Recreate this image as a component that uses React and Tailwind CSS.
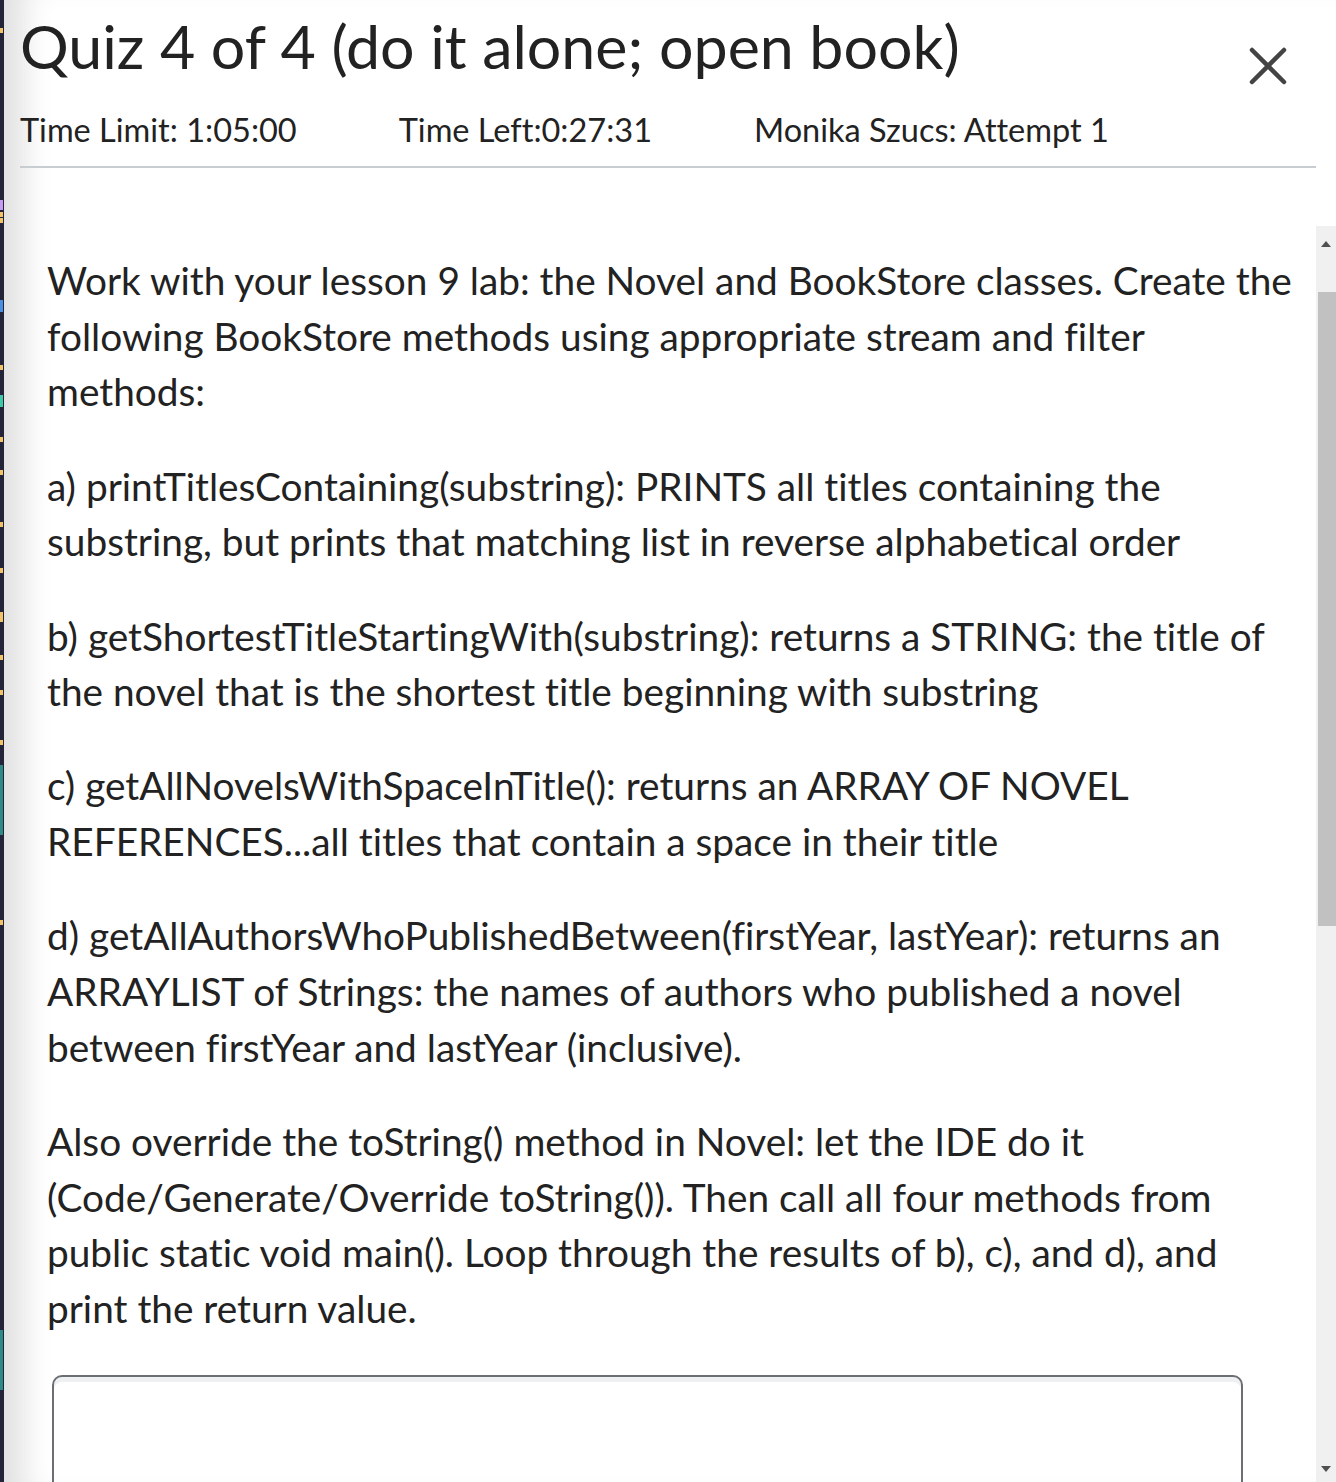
import React from "react";

const paragraphs = [
  "Work with your lesson 9 lab: the Novel and BookStore classes. Create the following BookStore methods using appropriate stream and filter methods:",
  "a) printTitlesContaining(substring): PRINTS all titles containing the substring, but prints that matching list in reverse alphabetical order",
  "b) getShortestTitleStartingWith(substring): returns a STRING: the title of the novel that is the shortest title beginning with substring",
  "c) getAllNovelsWithSpaceInTitle(): returns an ARRAY OF NOVEL REFERENCES...all titles that contain a space in their title",
  "d) getAllAuthorsWhoPublishedBetween(firstYear, lastYear): returns an ARRAYLIST of Strings: the names of authors who published a novel between firstYear and lastYear (inclusive).",
  "Also override the toString() method in Novel: let the IDE do it (Code/Generate/Override toString()). Then call all four methods from public static void main(). Loop through the results of b), c), and d), and print the return value.",
];

// bits of the window behind, peeking out on the left edge
const stripDots = [28, 212, 218, 307, 365, 437, 470, 522, 568, 612, 617, 655, 690, 740, 770, 790, 920];

function EdgeStrip() {
  return (
    <svg width="4" height="1482" className="shrink-0 block">
      <rect width="4" height="1482" fill="#23233a" />
      {stripDots.map((y) => (
        <rect key={y} x="0" y={y} width="3" height="5" fill="#f2c46a" />
      ))}
      <rect x="0" y="200" width="3" height="10" fill="#c49bf0" />
      <rect x="0" y="300" width="3" height="12" fill="#4a90e2" />
      <rect x="0" y="395" width="3" height="12" fill="#3ec9a7" />
      <rect x="0" y="765" width="3" height="70" fill="#2e8a84" />
      <rect x="0" y="1330" width="3" height="60" fill="#2e8a84" />
    </svg>
  );
}

function CloseIcon() {
  return (
    <svg width="40" height="40" viewBox="0 0 40 40">
      <path d="M4 4 L36 36 M36 4 L4 36" stroke="#444" strokeWidth="4.5" strokeLinecap="round" />
    </svg>
  );
}

function Arrow({ up }) {
  return (
    <svg width="10" height="6" viewBox="0 0 10 6">
      <path d={up ? "M0 6 L5 0 L10 6 Z" : "M0 0 L10 0 L5 6 Z"} fill="#505050" />
    </svg>
  );
}

export default function App() {
  return (
    <div className="w-[1336px] h-[1482px] overflow-hidden bg-white flex font-['Lato',sans-serif] text-[#222] [font-variant-ligatures:none]">
      <EdgeStrip />
      <div className="flex-1 flex flex-col shadow-[inset_40px_0_30px_-20px_rgba(0,0,0,0.12)]">
        {/* header */}
        <div className="pl-[16px] pr-[20px]">
          <div className="flex items-start justify-between">
            <h1 className="text-[60.9px] leading-[92px] font-normal">
              Quiz 4 of 4 (do it alone; open book)
            </h1>
            <div className="mt-[46px] mr-[28px]">
              <CloseIcon />
            </div>
          </div>
          <div className="flex gap-[102px] text-[32.5px] leading-[40px] pt-[18px] pb-[16px]">
            <span>Time Limit: 1:05:00</span>
            <span>Time Left:0:27:31</span>
            <span>Monika Szucs: Attempt 1</span>
          </div>
          <div className="h-[2px] bg-[#c7cdd1]" />
        </div>

        {/* question body */}
        <div className="flex flex-1 mt-[58px] min-h-0">
          <div className="flex-1 pl-[43px] pt-[27px] pr-[16px]">
            {paragraphs.map((p, i) => (
              <p key={i} className="text-[38.8px] leading-[55.7px] mb-[38.5px]">
                {p}
              </p>
            ))}
            <div className="ml-[5px] w-[1191px] h-[200px] mt-[31px] border-2 border-[#6b6f73] rounded-[10px] shadow-[inset_0_5px_0_0_#eef0f1]" />
          </div>
          <div className="w-[20px] bg-[#f0f0f0] flex flex-col items-center">
            <div className="h-[36px] flex items-center justify-center">
              <Arrow up />
            </div>
            <div className="ml-[2px] w-[18px] h-[634px] mt-[30px] bg-[#c1c1c1]" />
            <div className="flex-1" />
            <div className="h-[26px] flex items-center justify-center">
              <Arrow />
            </div>
          </div>
        </div>
      </div>
    </div>
  );
}
